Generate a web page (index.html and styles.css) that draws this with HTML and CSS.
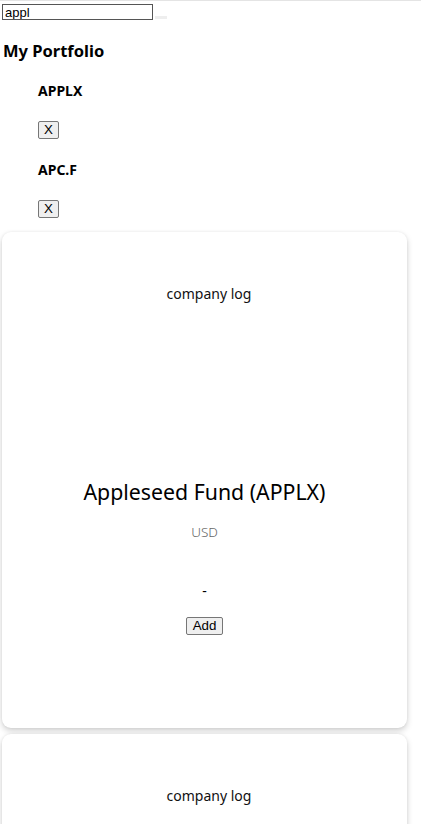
FILE: index.html
```html
<!DOCTYPE html>
<html>
<head>
<meta charset="utf-8">
<link rel="stylesheet" href="styles.css">
</head>
<body>
<div class="topline"></div>
<div class="search">
  <input class="search-input" type="text" value="appl">
  <span class="search-extra"></span>
</div>
<h3 class="portfolio-title">My Portfolio</h3>
<ul class="portfolio-list">
  <li class="portfolio-item">
    <p class="symbol">APPLX</p>
    <button class="remove-btn">X</button>
  </li>
  <li class="portfolio-item">
    <p class="symbol">APC.F</p>
    <button class="remove-btn">X</button>
  </li>
</ul>
<div class="card">
  <div class="logo"><span class="logo-alt">company logo</span></div>
  <h2 class="fund-name">Appleseed Fund (APPLX)</h2>
  <p class="currency">USD</p>
  <p class="price">-</p>
  <button class="add-btn">Add</button>
</div>
<div class="card">
  <div class="logo"><span class="logo-alt">company logo</span></div>
  <h2 class="fund-name">Apple Inc. (APC.F)</h2>
  <p class="currency">EUR</p>
  <p class="price">-</p>
  <button class="add-btn">Add</button>
</div>
</body>
</html>
```
FILE: styles.css
```css
html, body {
  margin: 0;
  padding: 0;
  background: #fff;
}
body {
  font-family: "Noto Sans", "Open Sans", sans-serif;
  color: #000;
}
.topline {
  height: 1px;
  background: #e4e4e4;
}
.search {
  display: flex;
  align-items: flex-end;
  padding: 3px 0 0 2px;
}
.search-input {
  width: 145px;
  height: 12px;
  padding: 1px 2px;
  border: 1px solid #555;
  font-family: "Liberation Sans", Arial, sans-serif;
  font-size: 13px;
  color: #000;
}
.search-extra {
  display: block;
  width: 12px;
  height: 3px;
  margin: 0 0 1px 2px;
  background: #eee;
}
.portfolio-title {
  margin: 20px 0 0 3px;
  font-size: 16.5px;
  font-weight: 700;
  line-height: 22px;
}
.portfolio-list {
  list-style: none;
  margin: 19px 0 0 0;
  padding: 0 0 0 38px;
}
.portfolio-item {
  display: flex;
  flex-direction: column;
  align-items: flex-start;
}
.symbol {
  margin: 0;
  font-size: 14px;
  font-weight: 700;
  line-height: 20px;
}
.remove-btn, .add-btn {
  font-family: "Liberation Sans", Arial, sans-serif;
  font-size: 13.33px;
  padding: 0 6px;
  height: 18px;
  line-height: 14px;
  background: #efefef;
  border: 1px solid #767676;
  border-radius: 2px;
  color: #000;
}
.remove-btn {
  margin: 20px 0 21px 0;
  width: 21px;
  padding: 0;
}
.portfolio-item:last-child .remove-btn {
  margin-bottom: 14px;
}
.card {
  margin: 0 14px 6px 2px;
  border-radius: 9px;
  box-shadow: 0 3px 6px rgba(0,0,0,0.18), 0 0 3px rgba(0,0,0,0.06);
  display: flex;
  flex-direction: column;
  align-items: center;
  padding: 52px 16px 93px;
  background: #fff;
}
.logo {
  width: 92px;
  height: 192px;
  overflow: hidden;
  box-sizing: border-box;
  padding-left: 8px;
}
.logo-alt {
  font-size: 14px;
  line-height: 20px;
  white-space: nowrap;
  display: block;
  color: #111;
}
.fund-name {
  margin: 0;
  font-size: 21.3px;
  font-weight: 400;
  line-height: 32px;
}
.currency {
  margin: 15px 0 0;
  font-size: 13.5px;
  font-weight: 300;
  color: #666;
  line-height: 18px;
}
.price {
  margin: 41px 0 0;
  font-size: 14px;
  line-height: 18px;
}
.add-btn {
  margin-top: 17px;
}
```
